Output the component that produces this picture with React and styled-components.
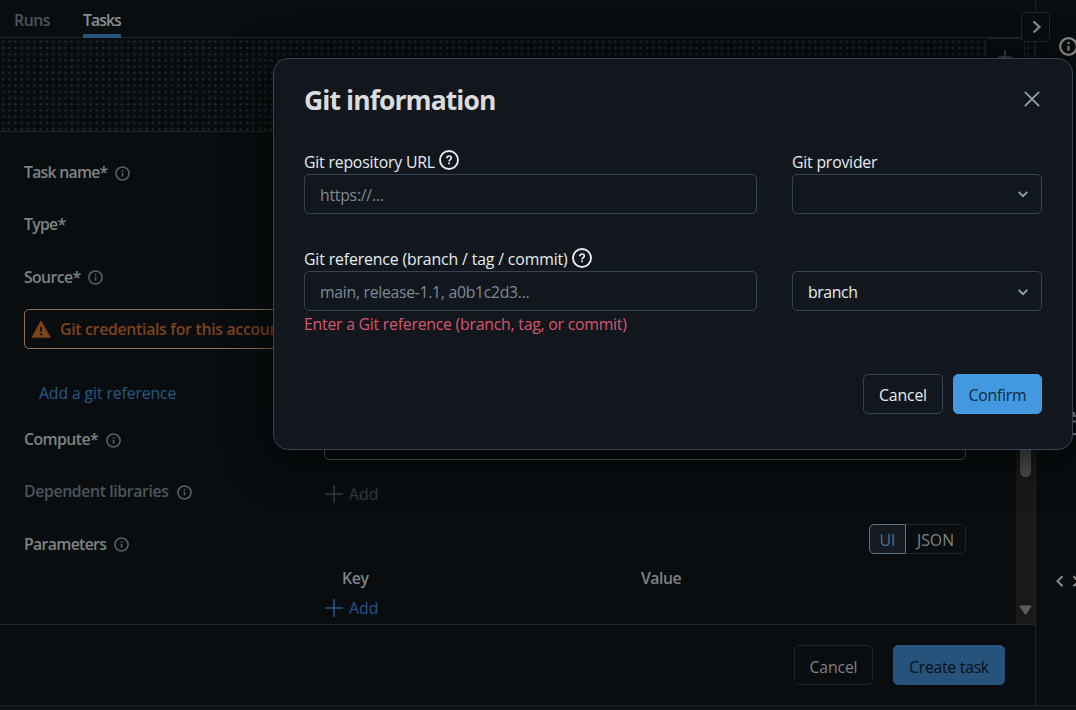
import React from "react";
import styled, { createGlobalStyle } from "styled-components";

const GlobalStyle = createGlobalStyle`
  * { box-sizing: border-box; }
  body {
    margin: 0;
    background: #090d0f;
    font-family: "Open Sans", "Noto Sans", sans-serif;
    font-size: 15.8px;
    line-height: 20px;
    color: #7f8284;
  }
`;

const Page = styled.div`
  width: 1076px;
  height: 710px;
  position: relative;
  display: grid;
  grid-template-columns: 1036px 40px;
  grid-template-rows: 705px 5px;
  overflow: hidden;
`;

const Main = styled.main`
  display: flex;
  flex-direction: column;
  border-right: 1px solid #1e2427;
  position: relative;
`;

const StatusStrip = styled.div`
  grid-column: 1 / -1;
  background: #0f1216;
  border-top: 1px solid #1e2427;
`;

const Text = styled.span`
  white-space: nowrap;
  letter-spacing: ${(p) => p.$track || 0}px;
`;

const Tabs = styled.nav`
  height: 38px;
  flex: none;
  display: flex;
  gap: 33px;
  padding-left: 14px;
  border-bottom: 1px solid #1e2427;
`;

const Tab = styled.div`
  height: 38px;
  width: ${(p) => p.$width}px;
  padding-top: 10px;
  font-weight: 600;
  color: ${(p) => (p.$active ? "#8b8e90" : "#4b555d")};
  border-bottom: 4px solid ${(p) => (p.$active ? "#25537b" : "transparent")};
`;

const Canvas = styled.section`
  height: 94px;
  flex: none;
  position: relative;
  border-bottom: 1px solid #1e2427;
  background-image: radial-gradient(circle, #252a2d 0.9px, transparent 1.3px);
  background-size: 6.25px 6.25px;
  background-position: 0 0.6px;
`;

const ZoomTool = styled.div`
  position: absolute;
  left: 985px;
  top: 0;
  width: 40px;
  height: 80px;
  border: 1px solid #1e2427;
  border-radius: 5px;
  background: #090d0f;
  display: flex;
  justify-content: center;
  padding-top: 11px;
  color: #53595d;
`;

const ExpandButton = styled.button`
  position: absolute;
  left: 1021px;
  top: 12px;
  width: 29px;
  height: 30px;
  padding: 0 0 0 2px;
  display: grid;
  place-items: center;
  background: #090d0f;
  border: 1px solid #23292d;
  border-radius: 5px;
  color: #8b8e90;
`;

const Body = styled.div`
  flex: 1;
  display: flex;
  min-height: 0;
`;

const Form = styled.form`
  width: 966px;
  padding: 14px 0 0 24px;
`;

const FormRow = styled.div`
  display: grid;
  grid-template-columns: 300px 1fr;
  height: ${(p) => p.$height || 52}px;
`;

const Label = styled.div`
  display: flex;
  align-items: center;
  gap: 8px;
  height: ${(p) => p.$height || 52}px;
  font-weight: 600;
  color: ${(p) => (p.$muted ? "#4b555d" : "#7f8284")};
  svg { color: #566068; margin-top: 2px; }
`;

const Alert = styled.div`
  height: 40px;
  margin-top: 6px;
  border: 1px solid #8f7351;
  border-radius: 5px;
  display: flex;
  align-items: center;
  gap: 9px;
  padding-left: 6px;
  font-weight: 600;
  color: #7e431a;
`;

const LinkRow = styled.div`
  margin-top: 23px;
  height: 41px;
  padding: 0 0 0 15px;
  display: flex;
  align-items: center;
  color: #245a86;
`;

const ComputeSelect = styled.div`
  height: 40px;
  margin-top: 7px;
  border: 1px solid #5b5f62;
  border-radius: 5px;
`;

const AddButton = styled.div`
  display: flex;
  align-items: center;
  gap: 6px;
  padding-left: 1px;
  height: ${(p) => p.$height}px;
  color: ${(p) => (p.$disabled ? "#343c42" : "#24548a")};
`;

const Params = styled.div`
  display: flex;
  flex-direction: column;
  padding-top: 7px;
`;

const Toggle = styled.div`
  align-self: flex-end;
  display: flex;
  height: 30px;
`;

const Segment = styled.div`
  width: ${(p) => p.$width}px;
  display: flex;
  align-items: center;
  justify-content: center;
  padding-top: 1px;
  border: 1px solid ${(p) => (p.$on ? "#5d7280" : "#1e2427")};
  border-left-width: ${(p) => (p.$on ? 1 : 0)}px;
  border-radius: ${(p) => (p.$on ? "5px 0 0 5px" : "0 5px 5px 0")};
  background: ${(p) => (p.$on ? "#141b22" : "transparent")};
  color: ${(p) => (p.$on ? "#4a7287" : "#7f8284")};
`;

const TableHead = styled.div`
  height: 46px;
  display: grid;
  grid-template-columns: 299px 1fr;
  align-items: center;
  padding: 1px 0 0 18px;
  font-weight: 600;
`;

const ScrollTrack = styled.div`
  margin-left: 50px;
  width: 19px;
  background: #191919;
  display: flex;
  flex-direction: column;
  align-items: center;
  justify-content: space-between;
  padding: 20px 0 9px;
`;

const ScrollThumb = styled.div`
  width: 11px;
  height: 325px;
  border-radius: 6px;
  background: #4e4e4e;
`;

const Footer = styled.footer`
  height: 81px;
  flex: none;
  border-top: 1px solid #1e2427;
  display: flex;
  justify-content: flex-end;
  gap: 20px;
  padding: 20px 30px 0 0;
`;

const Button = styled.button`
  width: ${(p) => p.$width}px;
  height: 40px;
  padding: ${(p) => p.$drop || 0}px 0 0;
  font: inherit;
  border-radius: 5px;
  border: 1px solid ${(p) => p.$border};
  background: ${(p) => p.$fill || "transparent"};
  color: ${(p) => p.$color};
`;

const Rail = styled.aside`
  width: 64px;
  display: flex;
  flex-direction: column;
  align-items: center;
  padding-top: 36px;
  color: #8b8b8b;
`;

const RailSlot = styled.div`
  height: ${(p) => p.$height}px;
  margin-top: ${(p) => p.$gap || 0}px;
  display: grid;
  place-items: center;
`;

const Dialog = styled.section`
  position: absolute;
  left: 273px;
  top: 58px;
  width: 800px;
  height: 392px;
  padding: 24px 30px 0;
  border: 1px solid #37444f;
  border-radius: 15px;
  background: #11171d;
  box-shadow: 0 8px 46px rgba(0, 0, 0, 0.7);
  color: #e8ecf0;
`;

const DialogHeader = styled.header`
  display: flex;
  justify-content: space-between;
  align-items: center;
  height: 32px;
  padding-right: 2px;
  color: #92a4b3;
`;

const Title = styled.h2`
  margin: 2px 0 0;
  font-size: 26.5px;
  line-height: 32px;
  font-weight: 700;
  color: #dcdcdd;
`;

const Fields = styled.div`
  display: grid;
  grid-template-columns: 453px 250px;
  column-gap: 35px;
  margin-top: ${(p) => p.$gap}px;
`;

const FieldLabel = styled.div`
  height: 27px;
  display: flex;
  align-items: center;
  gap: 4px;
  padding-top: 3px;
  svg { margin-top: ${(p) => p.$iconTop || -4}px; }
`;

const Input = styled.div`
  height: 40px;
  display: flex;
  align-items: center;
  justify-content: space-between;
  padding: ${(p) => p.$drop || 0}px 12px 0 15px;
  border: 1px solid #37444f;
  border-radius: 5px;
  color: ${(p) => (p.$placeholder ? "#7a8b98" : "#e8ecf0")};
  svg { color: #92a4b3; }
`;

const ErrorText = styled.div`
  margin-top: 3px;
  color: #d9556f;
`;

const Actions = styled.div`
  display: flex;
  justify-content: flex-end;
  gap: 10px;
  margin-top: 40px;
`;

const Info = ({ size = 15, width = 1.7 }) => (
  <svg width={size} height={size} viewBox="0 0 16 16" fill="none" stroke="currentColor" strokeWidth={width}>
    <circle cx="8" cy="8" r="7" />
    <path d="M8 7.3v4M8 4.2v1.7" />
  </svg>
);

const Help = () => (
  <svg width="20" height="20" viewBox="0 0 20 20" fill="none" stroke="currentColor" strokeWidth="1.9">
    <circle cx="10" cy="10" r="9" />
    <path d="M7.8 8.2c0-1.4 1-2.2 2.3-2.2s2.2.8 2.2 1.9c0 1.6-2.2 1.7-2.2 3.5" strokeWidth="1.7" />
    <path d="M10.1 12.6v1.7" strokeWidth="1.8" />
  </svg>
);

const Plus = ({ size = 18 }) => (
  <svg width={size} height={size} viewBox="0 0 18 18" fill="none" stroke="currentColor" strokeWidth="1.6">
    <path d="M9 0v18M0 9h18" />
  </svg>
);

const Chevron = () => (
  <svg width="12" height="8" viewBox="0 0 12 8" fill="none" stroke="currentColor" strokeWidth="1.9">
    <path d="M1.7 1.8 6 6.1l4.3-4.3" />
  </svg>
);

const Warning = () => (
  <svg width="20" height="18" viewBox="0 0 20 18">
    <path d="M10 .3 19.8 17.7H.2z" fill="currentColor" />
    <path d="M10 6.8v5M10 13.2v2" stroke="#090d0f" strokeWidth="1.8" />
  </svg>
);

export default function App() {
  return (
    <>
      <GlobalStyle />
      <Page>
        <Main>
          <Tabs>
            <Tab $width={36}><Text $track={-0.45}>Runs</Text></Tab>
            <Tab $active $width={38}><Text $track={-0.95}>Tasks</Text></Tab>
          </Tabs>
          <Canvas>
            <ZoomTool><Plus size={14} /></ZoomTool>
          </Canvas>
          <Body>
            <Form>
              <FormRow><Label><Text $track={-0.75}>Task name*</Text><Info /></Label></FormRow>
              <FormRow><Label><Text $track={-0.7}>Type*</Text></Label></FormRow>
              <FormRow $height={53}><Label $height={53}><Text $track={-0.62}>Source*</Text><Info /></Label></FormRow>
              <Alert><Warning /><Text $track={-0.29}>Git credentials for this account</Text></Alert>
              <LinkRow><Text $track={-0.12}>Add a git reference</Text></LinkRow>
              <FormRow>
                <Label><Text $track={-0.55}>Compute*</Text><Info /></Label>
                <ComputeSelect />
              </FormRow>
              <FormRow>
                <Label $muted><Text $track={-0.37}>Dependent libraries</Text><Info /></Label>
                <AddButton $disabled $height={58}><Plus /><Text>Add</Text></AddButton>
              </FormRow>
              <FormRow $height={107}>
                <Label $height={53}><Text $track={-0.66}>Parameters</Text><Info /></Label>
                <Params>
                  <Toggle>
                    <Segment $on $width={37}><Text>UI</Text></Segment>
                    <Segment $width={60}><Text>JSON</Text></Segment>
                  </Toggle>
                  <TableHead><Text $track={-0.35}>Key</Text><Text $track={-0.5}>Value</Text></TableHead>
                  <AddButton $height={16}><Plus /><Text>Add</Text></AddButton>
                </Params>
              </FormRow>
            </Form>
            <ScrollTrack>
              <ScrollThumb />
              <svg width="13" height="10" viewBox="0 0 13 10">
                <path d="M1.2.5h10.6q1.2 0 .6 1L7.5 9q-1 1.2-2 0L.6 1.5q-.6-1 .6-1z" fill="#5d5d5d" />
              </svg>
            </ScrollTrack>
          </Body>
          <Footer>
            <Button $drop={3} $width={79} $border="#1e2427" $color="#7f8284"><Text $track={-0.15}>Cancel</Text></Button>
            <Button $drop={3} $width={112} $border="#25537b" $fill="#25537b" $color="#091017"><Text $track={-0.28}>Create task</Text></Button>
          </Footer>
        </Main>
        <Rail>
          <RailSlot $height={21}><Info size={19} width={1.8} /></RailSlot>
          <RailSlot $height={28} $gap={353}>
            <svg width="24" height="28" viewBox="0 0 24 28" fill="none" stroke="currentColor" strokeWidth="2">
              <path d="M18 2v4h6M12 11.5h12M12 24h12" />
            </svg>
          </RailSlot>
          <RailSlot $height={14} $gap={136}>
            <svg width="24" height="14" viewBox="0 0 24 14" fill="none" stroke="currentColor" strokeWidth="2">
              <path d="M6.5 2.3 1.5 7.3l5 5M17.5 2.3l5 5-5 5" />
            </svg>
          </RailSlot>
        </Rail>
        <StatusStrip />
        <ExpandButton aria-label="Expand">
          <svg width="10" height="14" viewBox="0 0 10 14" fill="none" stroke="currentColor" strokeWidth="2.2">
            <path d="M1.5 1.5 7.5 7l-6 5.5" />
          </svg>
        </ExpandButton>
        <Dialog>
          <DialogHeader>
            <Title><Text $track={-0.92}>Git information</Text></Title>
            <svg width="16" height="16" viewBox="0 0 16 16" fill="none" stroke="currentColor" strokeWidth="1.7">
              <path d="m.9.9 14.2 14.2M15.1.9.9 15.1" />
            </svg>
          </DialogHeader>
          <Fields $gap={32}>
            <div>
              <FieldLabel><Text $track={-0.19}>Git repository URL</Text><Help /></FieldLabel>
              <Input $placeholder $drop={1}><Text $track={-0.25}>https://...</Text></Input>
            </div>
            <div>
              <FieldLabel><Text $track={-0.2}>Git provider</Text></FieldLabel>
              <Input><span /><Chevron /></Input>
            </div>
          </Fields>
          <Fields $gap={30}>
            <div>
              <FieldLabel $iconTop={-2}><Text $track={-0.13}>Git reference (branch / tag / commit)</Text><Help /></FieldLabel>
              <Input $placeholder $drop={2}><Text $track={-0.3}>main, release-1.1, a0b1c2d3...</Text></Input>
              <ErrorText><Text $track={-0.23}>Enter a Git reference (branch, tag, or commit)</Text></ErrorText>
            </div>
            <div>
              <FieldLabel />
              <Input $drop={1}><Text $track={-0.4}>branch</Text><Chevron /></Input>
            </div>
          </Fields>
          <Actions>
            <Button $drop={1} $width={80} $border="#37444f" $color="#e8ecf0"><Text $track={-0.15}>Cancel</Text></Button>
            <Button $drop={1} $width={89} $border="#4299e0" $fill="#4299e0" $color="#11293e"><Text $track={-0.25}>Confirm</Text></Button>
          </Actions>
        </Dialog>
      </Page>
    </>
  );
}
